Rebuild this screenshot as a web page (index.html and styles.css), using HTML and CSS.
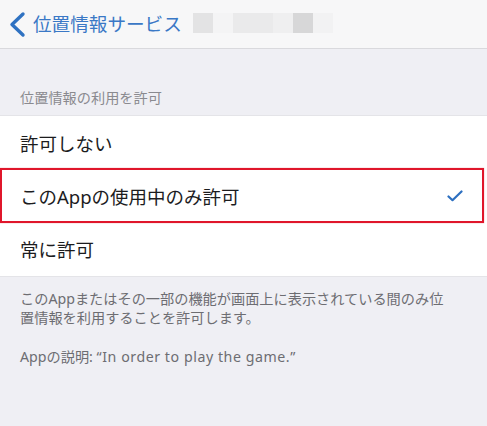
FILE: index.html
```html
<!DOCTYPE html>
<html lang="ja">
<head>
<meta charset="utf-8">
<link rel="stylesheet" href="styles.css">
</head>
<body>
<header class="nav">
  <svg class="chev" width="30" height="48" viewBox="0 0 30 48"><polyline points="23,14 12,24.5 23,35" fill="none" stroke="#2f72c2" stroke-width="3.4" stroke-linecap="round" stroke-linejoin="round"/></svg>
  <span class="title">位置情報サービス</span>
  <span class="blur">
    <span class="b b1"></span><span class="b b2"></span><span class="b b3"></span><span class="b b4"></span><span class="b b5"></span><span class="b b6"></span>
  </span>
</header>
<div class="section-head">位置情報の利用を許可</div>
<ul class="list">
  <li class="row">許可しない</li>
  <li class="row selected">このAppの使用中のみ許可
    <svg class="check" width="16" height="12" viewBox="0 0 16 12"><polyline points="1.5,6.5 5.5,10.2 14.5,1.5" fill="none" stroke="#2c6fc0" stroke-width="2.2" stroke-linecap="round" stroke-linejoin="round"/></svg>
  </li>
  <li class="row">常に許可</li>
</ul>
<div class="footer">
  <p class="note">このAppまたはその一部の機能が画面上に表示されている間のみ位<br>置情報を利用することを許可します。</p>
  <p class="note">Appの説明: <span class="latin">“In order to play the game.”</span></p>
</div>
</body>
</html>
```
FILE: styles.css
```css
html, body {
  margin: 0;
  padding: 0;
}
body {
  background: #efeff4;
  font-family: "Noto Sans", "Noto Sans CJK JP", sans-serif;
  width: 487px;
  height: 426px;
  overflow: hidden;
}
.nav {
  height: 48px;
  background: #f7f7f8;
  border-bottom: 1px solid #d9d9dd;
  display: flex;
  align-items: center;
}
.chev {
  flex: none;
  margin-right: 3px;
}
.title {
  color: #3a78c6;
  font-size: 18.6px;
  line-height: 24px;
}
.blur {
  display: flex;
  margin-left: 11px;
  height: 20px;
  margin-top: -3px;
}
.b { display: block; height: 20px; width: 20px; }
.b1 { background: #e3e3e4; }
.b2 { background: #f4f4f5; }
.b3 { background: #eaeaeb; width: 40px; }
.b4 { background: #efeff0; }
.b5 { background: #d7d7d8; }
.b6 { background: #f2f2f3; }
.section-head {
  color: #8a8a8f;
  font-size: 14.2px;
  line-height: 20px;
  padding: 39px 0 0 20px;
  height: 27px;
}
.list {
  list-style: none;
  margin: 0;
  padding: 0;
  background: #fff;
  border-top: 1px solid #e4e4e8;
  border-bottom: 1px solid #e4e4e8;
}
.row {
  position: relative;
  height: 53.3px;
  display: flex;
  align-items: center;
  padding-left: 20px;
  padding-right: 24px;
  font-size: 18.5px;
  color: #1c1c1e;
}
.selected::after {
  content: "";
  position: absolute;
  left: 0;
  top: -1px;
  width: 484px;
  height: 55px;
  box-sizing: border-box;
  border: 2.5px solid #e0162b;
  box-shadow: 0 0 1px rgba(224, 22, 43, 0.5);
}
.check {
  margin-left: auto;
}
.footer {
  padding: 12px 20px 0 20px;
}
.note {
  margin: 0 0 20px 0;
  color: #6d6d72;
  font-size: 14.2px;
  line-height: 19px;
}
.latin {
  letter-spacing: 0.55px;
}
```
